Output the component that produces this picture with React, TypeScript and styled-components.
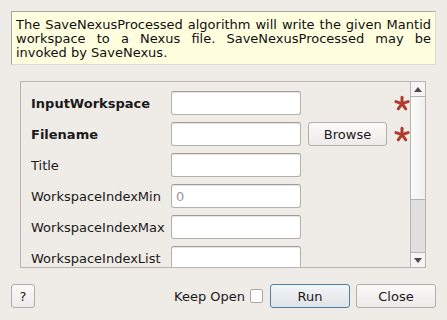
import styled, { createGlobalStyle } from 'styled-components';

const GlobalStyle = createGlobalStyle`
  html, body {
    margin: 0;
    padding: 0;
    background: #efebe7;
  }
  body {
    font-family: 'DejaVu Sans', 'Liberation Sans', sans-serif;
    font-size: 13px;
    color: #1c1c1c;
  }
`;

const Dialog = styled.div`
  width: 447px;
  height: 320px;
  display: flex;
  flex-direction: column;
  box-sizing: border-box;
  background: #efebe7;
`;

const Description = styled.div`
  margin: 11px 11px 0 11px;
  height: 54px;
  box-sizing: border-box;
  padding: 6px 4px 3px 4px;
  background: #ffffe0;
  border: 1px solid #dcdad5;
  border-top-color: #a9a7a3;
  border-left-color: #a9a7a3;
  line-height: 14px;
  text-align: justify;
  color: #101010;
`;

const Frame = styled.div`
  margin: 16px 21px 0 20px;
  height: 187px;
  box-sizing: border-box;
  border: 1px solid #b7b3ae;
  display: flex;
`;

const FormArea = styled.div`
  flex: 1;
  overflow: hidden;
  padding: 9px 0 0 10px;
  display: flex;
  flex-direction: column;
  gap: 7px;
`;

const Row = styled.div`
  display: grid;
  grid-template-columns: 133px 130px 79px 16px;
  column-gap: 7px;
  align-items: center;
  height: 24px;
  flex-shrink: 0;
`;

const Label = styled.span<{ $required?: boolean }>`
  font-weight: ${(p) => (p.$required ? 'bold' : 'normal')};
  white-space: nowrap;
  color: #1a1a1a;
`;

const Field = styled.div`
  height: 24px;
  box-sizing: border-box;
  background: #fff;
  border: 1px solid #b4b0ab;
  border-top-color: #9f9b96;
  border-radius: 3px;
  box-shadow: inset 0 1px 0 #e8e6e3;
  padding: 0 4px;
  display: flex;
  align-items: center;
  color: #9a9a9a;
`;

const Button = styled.div<{ $default?: boolean; $w?: number }>`
  width: ${(p) => p.$w ?? 80}px;
  height: 24px;
  box-sizing: border-box;
  border: 1px solid ${(p) => (p.$default ? '#4f7fa8' : '#b2aea9')};
  border-radius: 3px;
  background: ${(p) =>
    p.$default
      ? 'linear-gradient(#f3f5f7, #dfe4e8)'
      : 'linear-gradient(#fbfaf9, #ecebe9)'};
  display: flex;
  align-items: center;
  justify-content: center;
  color: #1a1a1a;
  flex-shrink: 0;
`;

const Star = styled.svg`
  width: 16px;
  height: 16px;
  display: block;
`;

const ScrollBar = styled.div`
  width: 14px;
  border-left: 1px solid #b7b3ae;
  display: flex;
  flex-direction: column;
  background: #e0dfdc;
`;

const ArrowBtn = styled.div<{ $top?: boolean }>`
  height: 14px;
  background: #f6f5f3;
  border-bottom: ${(p) => (p.$top ? '1px solid #b7b3ae' : 'none')};
  border-top: ${(p) => (p.$top ? 'none' : '1px solid #b7b3ae')};
  display: flex;
  align-items: center;
  justify-content: center;
`;

const Handle = styled.div`
  height: 103px;
  box-sizing: border-box;
  background: linear-gradient(to right, #fbfbfa, #f0efed);
  border-bottom: 1px solid #b7b3ae;
`;

const Trough = styled.div`
  flex: 1;
`;

const Footer = styled.div`
  margin: 16px 11px 0 11px;
  display: flex;
  align-items: center;
  height: 24px;
`;

const Spacer = styled.div`
  flex: 1;
`;

const KeepOpen = styled.span`
  margin-right: 5px;
  color: #1a1a1a;
`;

const CheckBox = styled.div`
  width: 13px;
  height: 14px;
  box-sizing: border-box;
  background: #fff;
  border: 1px solid #aaa6a1;
  border-radius: 2px;
  margin-right: 7px;
`;

const Gap = styled.div`
  width: 6px;
`;

const Asterisk = () => (
  <Star viewBox="0 0 16 16">
    <g stroke="#b23a2c" strokeWidth="3" strokeLinecap="round">
      {[0, 72, 144, 216, 288].map((a) => (
        <line key={a} x1="8" y1="8.6" x2="8" y2="2.2" transform={`rotate(${a} 8 8.6)`} />
      ))}
    </g>
  </Star>
);

const Arrow = ({ up }: { up?: boolean }) => (
  <svg width="8" height="5" viewBox="0 0 8 5">
    <polygon points={up ? '0,5 8,5 4,0' : '0,0 8,0 4,5'} fill="#4a4a4a" />
  </svg>
);

const fields: { name: string; required?: boolean; browse?: boolean; placeholder?: string }[] = [
  { name: 'InputWorkspace', required: true },
  { name: 'Filename', required: true, browse: true },
  { name: 'Title' },
  { name: 'WorkspaceIndexMin', placeholder: '0' },
  { name: 'WorkspaceIndexMax' },
  { name: 'WorkspaceIndexList' },
];

export default function App() {
  return (
    <>
      <GlobalStyle />
      <Dialog>
        <Description>
          The SaveNexusProcessed algorithm will write the given Mantid workspace to a Nexus file.
          SaveNexusProcessed may be invoked by SaveNexus.
        </Description>
        <Frame>
          <FormArea>
            {fields.map((f) => (
              <Row key={f.name}>
                <Label $required={f.required}>{f.name}</Label>
                <Field>{f.placeholder}</Field>
                {f.browse ? <Button $w={79}>Browse</Button> : <span />}
                {f.required ? <Asterisk /> : <span />}
              </Row>
            ))}
          </FormArea>
          <ScrollBar>
            <ArrowBtn $top>
              <Arrow up />
            </ArrowBtn>
            <Handle />
            <Trough />
            <ArrowBtn>
              <Arrow />
            </ArrowBtn>
          </ScrollBar>
        </Frame>
        <Footer>
          <Button $w={24}>?</Button>
          <Spacer />
          <KeepOpen>Keep Open</KeepOpen>
          <CheckBox />
          <Button $default>Run</Button>
          <Gap />
          <Button>Close</Button>
        </Footer>
      </Dialog>
    </>
  );
}
